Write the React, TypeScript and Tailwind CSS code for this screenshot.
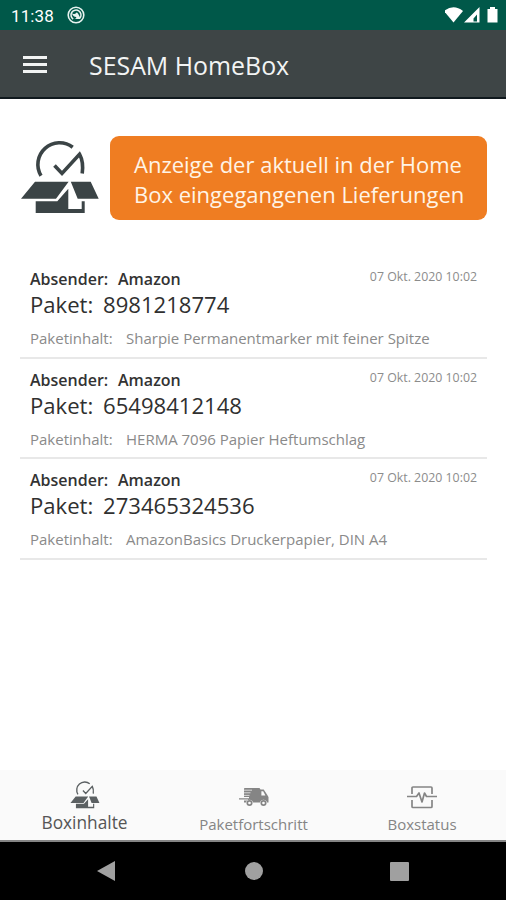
const parcels = [
  { sender: 'Amazon', id: '8981218774', content: 'Sharpie Permanentmarker mit feiner Spitze', date: '07 Okt. 2020 10:02' },
  { sender: 'Amazon', id: '65498412148', content: 'HERMA 7096 Papier Heftumschlag', date: '07 Okt. 2020 10:02' },
  { sender: 'Amazon', id: '273465324536', content: 'AmazonBasics Druckerpapier, DIN A4', date: '07 Okt. 2020 10:02' },
];

function BoxIcon({ className }: { className: string }) {
  return (
    <svg viewBox="0 0 80 75" className={className} fill="none" stroke="currentColor">
      <path d="M21 35.7A21.7 21.7 0 0 1 52.7 7.2M34.5 25.5L42 33.4 59.5 14.2Q63.8 22 62.2 33.6" strokeWidth="3.6" />
      <path d="M15 41.7h33.6L36 58.7H1zM50.8 41.7h19.9l8 17H57.7zM15.7 61.2h21.6l11-12.4V69h13.4v-7.8h3V73h-49z" fill="currentColor" stroke="none" />
    </svg>
  );
}

function TruckIcon() {
  return (
    <svg viewBox="0 0 30 20" className="h-5 w-[30px]" fill="#858585">
      <path d="M5 1.5Q5 1 6 1h14.5l1 1.5h3.2L28 7.5l1.5 2.5v5.5H28a3.6 3.6 0 0 0-7 0h-7a3.6 3.6 0 0 0-7 0H5v-2h4v-1H0v-1.2h10V9.9H5z" />
      <path d="M5 3.2h8M5 5.8h6.5M5 8.4h5.5" stroke="#fafafa" strokeWidth="0.7" />
      <path d="M22.4 4.3h1.8l2.2 4.2h-4z" fill="#fafafa" />
      <circle cx="10.5" cy="16" r="2.2" fill="none" stroke="#858585" strokeWidth="1.7" />
      <circle cx="24.5" cy="16" r="2.2" fill="none" stroke="#858585" strokeWidth="1.7" />
    </svg>
  );
}

function StatusIcon() {
  return (
    <svg viewBox="0 0 30 24" className="h-6 w-[30px]" fill="none" stroke="#858585" strokeWidth="1.7">
      <path d="M5 9V3q0-1 1-1h18q1 0 1 1v6M5 15v6.5q0 1 1 1h18q1 0 1-1V15M0 11.5h9.5l2.5-3.5 3 9 2.5-9 2 3.5H30" strokeLinejoin="round" />
    </svg>
  );
}

export default function App() {
  return (
    <div className="flex h-[900px] w-[506px] flex-col overflow-hidden bg-white font-['Open_Sans',sans-serif]">
      <div className="flex h-[30px] shrink-0 items-center bg-[#005849] pl-[11px] pr-[7px] text-white">
        <span className="pt-[2px] font-['Roboto',sans-serif] text-[17px] leading-5 tracking-[0.1px]">11:38</span>
        <svg viewBox="0 0 18 18" className="ml-[13px] h-[18px] w-[18px]" fill="none" stroke="#e8f3f0">
          <circle cx="9" cy="9" r="7.8" strokeWidth="1.6" />
          <path d="M6.2 13.2A5 5 0 1 1 13.2 11.8" strokeWidth="1.5" />
          <path d="M5 7.2Q8 9 9 7t3.6 3.4l1 2.6H7.5q2.5-.6 1.7-2Q6 11 5 7.2z" fill="#e8f3f0" stroke="none" />
        </svg>
        <svg viewBox="0 0 54 18" className="ml-auto h-[18px] w-[54px]" fill="#fff">
          <path d="M-1 5Q8.500-2.5 18 5L8.500 16.500z" />
          <path fillRule="evenodd" d="M34.500 1v15.500H19zM32 8.500l-3.500 4v3H32z" />
          <path d="M45 1h5v2h2.500v13.500h-10V3H45z" />
        </svg>
      </div>
      <header className="flex h-[69px] shrink-0 items-center border-b-2 border-[#10191e] bg-[#3e4546] pl-[23px] pt-[2px] text-[#f2f4f4]">
        <div className="flex w-6 flex-col gap-[4px]">
          <div className="h-[3px] bg-current" />
          <div className="h-[3px] bg-current" />
          <div className="h-[3px] bg-current" />
        </div>
        <h1 className="ml-[42px] text-[24.9px] leading-8">SESAM HomeBox</h1>
      </header>
      <main className="flex flex-1 flex-col pl-5 pr-[19px] pt-[37px]">
        <div className="flex items-start">
          <BoxIcon className="mt-1 h-[75px] w-20 shrink-0 text-[#3b4446]" />
          <div className="ml-[10px] flex h-[84px] w-[377px] flex-col justify-center whitespace-nowrap rounded-[9px] bg-[#ef7d22] pl-6 pt-[2px] text-[22px] leading-[30px] text-[#fff4e6]">
            <div>Anzeige der aktuell in der Home</div>
            <div>Box eingegangenen Lieferungen</div>
          </div>
        </div>
        <ul className="mt-[38px]">
          {parcels.map((p) => (
            <li key={p.id} className="h-[100.7px] whitespace-nowrap border-b-2 border-[#e8e8e8] px-[10px] pt-[9px]">
              <div className="flex h-[23px] justify-between">
                <div className="flex text-[16px] font-semibold leading-6 text-[#333]">
                  <span className="w-[88px]">Absender:</span>
                  <span>{p.sender}</span>
                </div>
                <span className="pt-px text-[12.35px] leading-[18px] text-[#8c8c8c]">{p.date}</span>
              </div>
              <div className="flex text-[22.1px] leading-7 text-[#303030]">
                <span className="w-[73px]">Paket:</span>
                <span>{p.id}</span>
              </div>
              <div className="mt-[10px] flex text-[15px] leading-5 text-[#8a8a8a]">
                <span className="w-[96px]">Paketinhalt:</span>
                <span>{p.content}</span>
              </div>
            </li>
          ))}
        </ul>
      </main>
      <nav className="grid h-[72px] shrink-0 grid-cols-[169px_169px_168px] border-b-2 border-[#858585] bg-[#fafafa] text-center text-[#858585]">
        <div className="flex flex-col items-center pt-[11px]">
          <BoxIcon className="h-[28px] w-[30px] text-[#5b6062]" />
          <span className="mt-[2px] text-[17.3px] leading-6 text-[#555]">Boxinhalte</span>
        </div>
        <div className="flex flex-col items-center pt-[17px]">
          <TruckIcon />
          <span className="mt-[5px] text-[15px] leading-6">Paketfortschritt</span>
        </div>
        <div className="flex flex-col items-center pt-[15px]">
          <StatusIcon />
          <span className="mt-[3px] text-[15px] leading-6">Boxstatus</span>
        </div>
      </nav>
      <footer className="flex h-[58px] shrink-0 items-center bg-black pl-[97px] text-[#a0a0a0]">
        <svg viewBox="0 0 18 20" className="h-5 w-[18px]" fill="currentColor"><path d="M18 0v20L0 10z" /></svg>
        <div className="ml-[130px] h-[18px] w-[18px] rounded-full bg-current" />
        <div className="ml-[127px] h-[19px] w-[19px] rounded-[1px] bg-current" />
      </footer>
    </div>
  );
}
